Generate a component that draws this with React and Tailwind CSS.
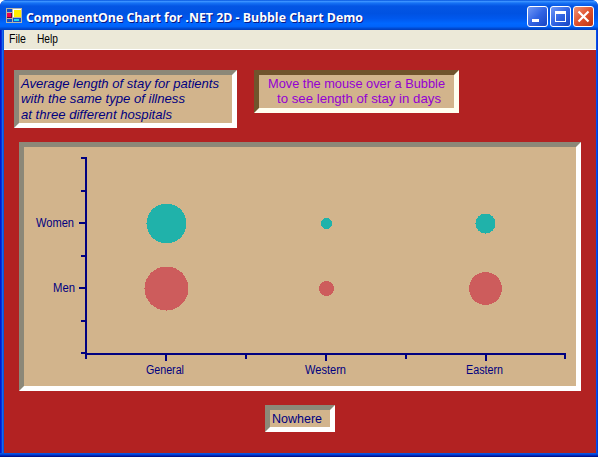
const bubbles = [
  { x: 166.5, y: 223.5, r: 20, fill: "#20b2aa" },
  { x: 326.5, y: 223.5, r: 5.5, fill: "#20b2aa" },
  { x: 485.5, y: 223.5, r: 10, fill: "#20b2aa" },
  { x: 166.5, y: 288.5, r: 22, fill: "#cd5c5c" },
  { x: 326.5, y: 288.5, r: 7.5, fill: "#cd5c5c" },
  { x: 485.5, y: 288.5, r: 16.5, fill: "#cd5c5c" },
];

const labels = [
  { text: "Women", x: 36, y: 227, w: 38 },
  { text: "Men", x: 53, y: 292, w: 22 },
  { text: "General", x: 146, y: 374, w: 38 },
  { text: "Western", x: 305, y: 374, w: 41 },
  { text: "Eastern", x: 466, y: 374, w: 37 },
];

function AppIcon() {
  return (
    <svg width="16" height="15" viewBox="0 0 16 15" shapeRendering="crispEdges">
      <path fill="#b8b5a8" d="M0 0h16v15H0z" />
      <path fill="#1250c8" d="M1 1h5v3H1zM1 11h5v3H1zM7 10h8v4H7z" />
      <path fill="#fff" d="M7 1h8v8H7z" />
      <path fill="#ffee00" d="M8 2h7v7H8z" />
      <path fill="#6b0030" d="M1 5h5v5H1z" />
      <path fill="#f00050" d="M1 5h4v4H1z" />
      <path fill="#20d8f0" d="M8 11h5v2H8z" />
    </svg>
  );
}

function CaptionButton({ close, children }) {
  return (
    <div
      className={`h-[21px] w-[21px] rounded-[3px] border border-white bg-linear-to-br ${
        close ? "from-[#ee9275] via-[#e0512c] to-[#bd3410]" : "from-[#7197f5] via-[#3264e4] to-[#1744c3]"
      }`}
    >
      <svg width="19" height="19" viewBox="0 0 19 19" shapeRendering="crispEdges">
        {children}
      </svg>
    </div>
  );
}

function TitleBar() {
  return (
    <div className="flex h-[30px] shrink-0 items-start rounded-t-[6px] bg-[linear-gradient(to_bottom,#0453dd_0%,#3a91ff_5%,#1672f5_10%,#0455e4_20%,#0052e2_45%,#0058ee_62%,#0067ff_78%,#0064fb_88%,#0047cc_96%,#003dbb_100%)] pr-[4px] pl-[6px]">
      <div className="mt-[8px]">
        <AppIcon />
      </div>
      <div className="mt-[8px] ml-[4px] flex-1">
        <svg width="345" height="20" className="block overflow-visible font-['Open_Sans','Noto_Sans',sans-serif] text-[13px] font-bold">
          <text x="1" y="15" textLength="337" lengthAdjust="spacingAndGlyphs" fill="#0a1883">ComponentOne Chart for .NET 2D - Bubble Chart Demo</text>
          <text x="0" y="14" textLength="337" lengthAdjust="spacingAndGlyphs" fill="#fff">ComponentOne Chart for .NET 2D - Bubble Chart Demo</text>
        </svg>
      </div>
      <div className="mt-[6px] flex gap-[2px]">
        <CaptionButton>
          <path d="M4 12h7v3H4z" fill="#fff" />
        </CaptionButton>
        <CaptionButton>
          <path d="M4 4h11v11H4zM5 7v7h9V7z" fill="#fff" fillRule="evenodd" />
        </CaptionButton>
        <CaptionButton close>
          <path d="M4.5 4.5l10 10M14.5 4.5l-10 10" stroke="#fff" strokeWidth="2.2" shapeRendering="auto" />
        </CaptionButton>
      </div>
    </div>
  );
}

function Line({ text, x, y, w, fill }) {
  return (
    <text x={x} y={y} textLength={w} lengthAdjust="spacingAndGlyphs" fill={fill}>
      {text}
    </text>
  );
}

function Chart() {
  return (
    <svg width="552" height="239" viewBox="24 147 552 239" className="block text-[12.5px]">
      <g fill="#000080" shapeRendering="crispEdges">
        <path d="M85 157h2v202h-2zM85 353h481v2H85z" />
        <path d="M81 157h4v2h-4zM81 190h4v2h-4zM79 222h6v2h-6zM81 255h4v2h-4zM79 287h6v2h-6zM81 320h4v2h-4zM81 352h4v2h-4z" />
        <path d="M165 355h2v6h-2zM245 355h2v4h-2zM325 355h2v6h-2zM405 355h2v4h-2zM485 355h2v6h-2zM564 355h2v4h-2z" />
      </g>
      {bubbles.map((b, i) => (
        <circle key={i} cx={b.x} cy={b.y} r={b.r} fill={b.fill} shapeRendering="crispEdges" />
      ))}
      {labels.map((l) => (
        <Line key={l.text} {...l} fill="#000080" />
      ))}
    </svg>
  );
}

const bevel = "border-[5px] border-t-[#8c8878] border-l-[#8c8878] border-r-white border-b-white bg-[#d2b48c]";

export default function App() {
  return (
    <div className="h-[457px] w-[598px] bg-white font-['Liberation_Sans',Arial,sans-serif]">
      <div className="flex h-full flex-col overflow-hidden rounded-t-[6px] bg-[linear-gradient(to_right,#0019cf_0px,#0019cf_1px,#0831d9_1px,#0831d9_2px,#166aee_2px,#166aee_3px,#0855dd_3px,#0855dd_4px,#0050f0_5px,#0050f0_597px,#0838d0_597px)]">
        <TitleBar />
        <div className="flex flex-1 flex-col pr-[2px] pl-[4px]">
          <div className="flex flex-1 flex-col bg-[#b22222]">
            <div className="flex h-[20px] items-center border-b border-white bg-[#ece9d8]">
              <svg width="80" height="19" className="block text-[12.5px]">
                <Line text="File" x={5} y={13} w={17} fill="#000" />
                <Line text="Help" x={33} y={13} w={21} fill="#000" />
              </svg>
            </div>
            <div className="flex items-start gap-[17px] pt-[20px] pl-[10px]">
              <div className={`h-[58px] w-[223px] ${bevel}`}>
                <svg width="213" height="48" className="block text-[13.5px] italic">
                  <Line text="Average length of stay for patients" x={2} y={13} w={198} fill="#000080" />
                  <Line text="with the same type of illness" x={2} y={28} w={164} fill="#000080" />
                  <Line text="at three different hospitals" x={2} y={44} w={151} fill="#000080" />
                </svg>
              </div>
              <div className="h-[43px] w-[205px] border-[5px] border-t-[#70542c] border-r-[#fffff0] border-b-[#fffff0] border-l-[#70542c] bg-[#d2b48c]">
                <svg width="195" height="33" className="block text-[13.5px]">
                  <Line text="Move the mouse over a Bubble" x={9} y={13} w={177} fill="#9400d3" />
                  <Line text="to see length of stay in days" x={18} y={28} w={164} fill="#9400d3" />
                </svg>
              </div>
            </div>
            <div className={`mt-[14px] ml-[15px] h-[249px] w-[562px] ${bevel}`}>
              <Chart />
            </div>
            <div className={`mt-[14px] ml-[261px] h-[27px] w-[70px] ${bevel}`}>
              <svg width="60" height="17" className="block text-[13.5px]">
                <Line text="Nowhere" x={2} y={13} w={50} fill="#000080" />
              </svg>
            </div>
          </div>
        </div>
        <div className="h-[4px] shrink-0 bg-[linear-gradient(to_bottom,#0855dd_0px,#0855dd_1px,#0441d8_1px,#0441d8_2px,#0029b8_2px,#0029b8_3px,#00138c_3px)]" />
      </div>
    </div>
  );
}
